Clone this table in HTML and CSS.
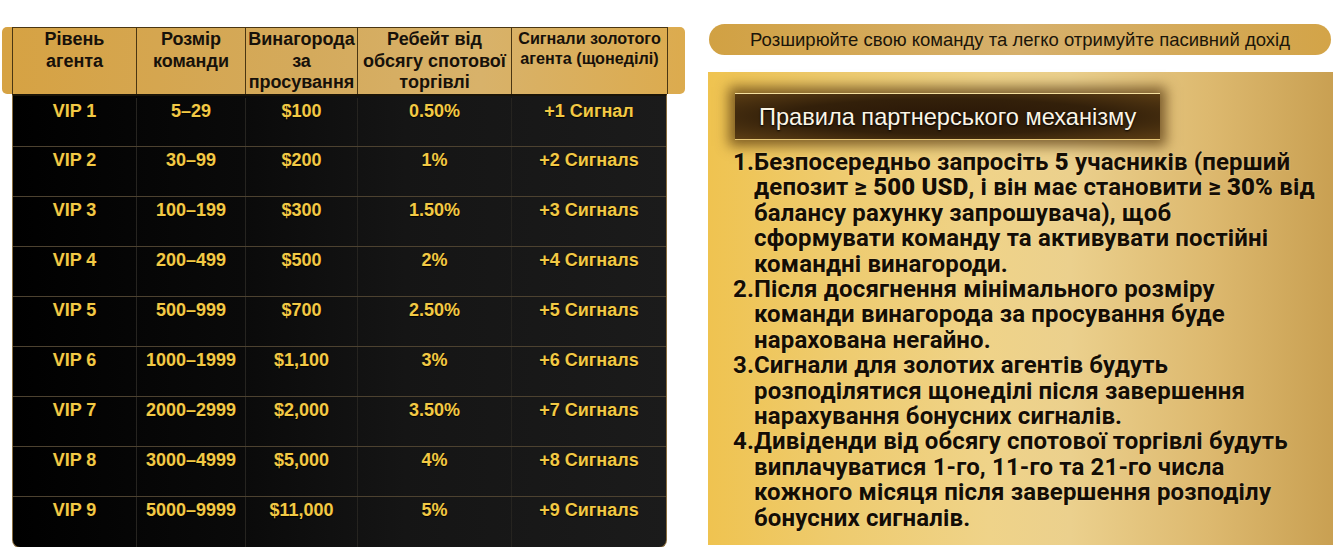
FILE: index.html
```html
<!DOCTYPE html>
<html lang="uk">
<head>
<meta charset="utf-8">
<title>VIP агенти</title>
<link rel="stylesheet" href="styles.css">
</head>
<body>
<div class="page">
  <section class="board">
    <div class="thead">
      <div class="grid head-grid">
        <div class="th">Рівень<br>агента</div>
        <div class="th">Розмір<br>команди</div>
        <div class="th">Винагорода<br>за<br>просування</div>
        <div class="th">Ребейт від<br>обсягу спотової<br>торгівлі</div>
        <div class="th th-small">Сигнали золотого<br>агента (щонеділі)</div>
      </div>
    </div>
    <div class="tbody">
      <div class="grid row"><div class="td">VIP 1</div><div class="td">5–29</div><div class="td">$100</div><div class="td">0.50%</div><div class="td">+1 Сигнал</div></div>
      <div class="grid row"><div class="td">VIP 2</div><div class="td">30–99</div><div class="td">$200</div><div class="td">1%</div><div class="td">+2 Сигналs</div></div>
      <div class="grid row"><div class="td">VIP 3</div><div class="td">100–199</div><div class="td">$300</div><div class="td">1.50%</div><div class="td">+3 Сигналs</div></div>
      <div class="grid row"><div class="td">VIP 4</div><div class="td">200–499</div><div class="td">$500</div><div class="td">2%</div><div class="td">+4 Сигналs</div></div>
      <div class="grid row"><div class="td">VIP 5</div><div class="td">500–999</div><div class="td">$700</div><div class="td">2.50%</div><div class="td">+5 Сигналs</div></div>
      <div class="grid row"><div class="td">VIP 6</div><div class="td">1000–1999</div><div class="td">$1,100</div><div class="td">3%</div><div class="td">+6 Сигналs</div></div>
      <div class="grid row"><div class="td">VIP 7</div><div class="td">2000–2999</div><div class="td">$2,000</div><div class="td">3.50%</div><div class="td">+7 Сигналs</div></div>
      <div class="grid row"><div class="td">VIP 8</div><div class="td">3000–4999</div><div class="td">$5,000</div><div class="td">4%</div><div class="td">+8 Сигналs</div></div>
      <div class="grid row"><div class="td">VIP 9</div><div class="td">5000–9999</div><div class="td">$11,000</div><div class="td">5%</div><div class="td">+9 Сигналs</div></div>
    </div>
  </section>

  <section class="side">
    <div class="pill">Розширюйте свою команду та легко отримуйте пасивний дохід</div>
    <div class="panel">
      <div class="title">Правила партнерського механізму</div>
      <ol class="rules">
        <li><span class="num">1.</span><span class="txt">Безпосередньо запросіть <b>5</b> учасників (перший<br>депозит <b>≥ 500 USD</b>, і він має становити <b>≥ 30%</b> від<br>балансу рахунку запрошувача), щоб<br>сформувати команду та активувати постійні<br>командні винагороди.</span></li>
        <li><span class="num">2.</span><span class="txt">Після досягнення мінімального розміру<br>команди винагорода за просування буде<br>нарахована негайно.</span></li>
        <li><span class="num">3.</span><span class="txt">Сигнали для золотих агентів будуть<br>розподілятися щонеділі після завершення<br>нарахування бонусних сигналів.</span></li>
        <li><span class="num">4.</span><span class="txt">Дивіденди від обсягу спотової торгівлі будуть<br>виплачуватися 1-го, 11-го та 21-го числа<br>кожного місяця після завершення розподілу<br>бонусних сигналів.</span></li>
      </ol>
    </div>
  </section>
</div>
</body>
</html>
```

FILE: styles.css
```css
* { box-sizing: border-box; }

body {
  margin: 0;
  background: #ffffff;
  font-family: "Liberation Sans", Arial, sans-serif;
}

.page {
  display: flex;
  align-items: flex-start;
  height: 547px;
  overflow: hidden;
}

/* ---------- table ---------- */
.board {
  margin: 27px 0 0 2px;
  width: 683px;
}

.thead {
  height: 67px;
  padding: 0 17px 0 10px;
  border-radius: 5px;
  background: linear-gradient(90deg, #d6a243 0%, #d4aa5c 45%, #d8b26a 70%, #dcab4e 100%);
}

.grid {
  display: grid;
  grid-template-columns: 124px 109px 112px 154px 1fr;
}

.head-grid {
  height: 67px;
  border-top: 1px solid #4a3612;
  border-right: 1px solid #4a3612;
}

.th {
  border-left: 1px solid #4a3612;
  text-align: center;
  font-weight: 700;
  font-size: 18px;
  line-height: 21.5px;
  color: #17110a;
  padding-top: 1px;
}

.th-small {
  font-size: 16.2px;
  line-height: 20px;
  padding-top: 0;
}

.tbody {
  margin-left: 10px;
  width: 655px;
  padding-top: 1px;
  border: 1px solid #8a6e3e;
  border-top: 2px solid #1a1408;
  border-radius: 0 0 8px 8px;
  background: linear-gradient(90deg, #000000 0%, #0a0a0a 35%, #151515 60%, #1b1b1b 100%);
}

.tbody .grid {
  grid-template-columns: 123px 109px 112px 154px 1fr;
}

.row {
  height: 50px;
  border-bottom: 1px solid #4d4230;
}

.row:first-child {
  height: 50px;
  padding-top: 1px;
}

.row:last-child {
  border-bottom: 0;
}

.td {
  border-left: 1px solid #262420;
  text-align: center;
  font-weight: 700;
  font-size: 18px;
  line-height: 22px;
  padding-top: 2px;
  color: #f2c945;
  text-shadow: 0 1px 1px #000, 0 0 1px #3a2a00;
}

.td:first-child {
  border-left: 0;
}

/* ---------- right side ---------- */
.side {
  margin: 24px 0 0 23px;
  width: 625px;
}

.pill {
  margin-left: 1px;
  width: 622px;
  height: 31px;
  border-radius: 16px;
  background: linear-gradient(90deg, #d1a143 0%, #d6b06c 50%, #d3a448 100%);
  text-align: center;
  font-size: 18.5px;
  line-height: 31px;
  color: #1b1509;
}

.panel {
  margin-top: 17px;
  height: 473px;
  padding-top: 21px;
  background: linear-gradient(90deg, #efc350 0%, #eecb6e 20%, #efd389 45%, #ebd08d 58%, #ddb96f 80%, #c9a052 100%);
}

.title {
  display: inline-block;
  margin-left: 27px;
  height: 47px;
  padding: 0 24px;
  line-height: 46px;
  font-size: 23.6px;
  color: #fbf5e6;
  text-shadow: 0 1px 2px #000;
  background: radial-gradient(ellipse at center, #2a1707 0%, #33200a 55%, #5b3d14 100%);
  border-top: 1px solid #f5e0a0;
  border-bottom: 1px solid #e8c878;
  box-shadow: 0 0 12px 6px rgba(80, 50, 12, 0.7);
}

.rules {
  list-style: none;
  margin: 10px 0 0 25px;
  padding: 0;
  font-family: "Roboto", "Liberation Sans", sans-serif;
  font-weight: 700;
  font-size: 24px;
  letter-spacing: 0.15px;
  line-height: 25.4px;
  color: #140d04;
  text-shadow: 0 0 2px rgba(255, 240, 200, 0.5);
}

.rules li {
  display: flex;
}

.num {
  flex: none;
  width: 21px;
}

.txt {
  white-space: nowrap;
}

.txt b {
  font-weight: 900;
}
```
